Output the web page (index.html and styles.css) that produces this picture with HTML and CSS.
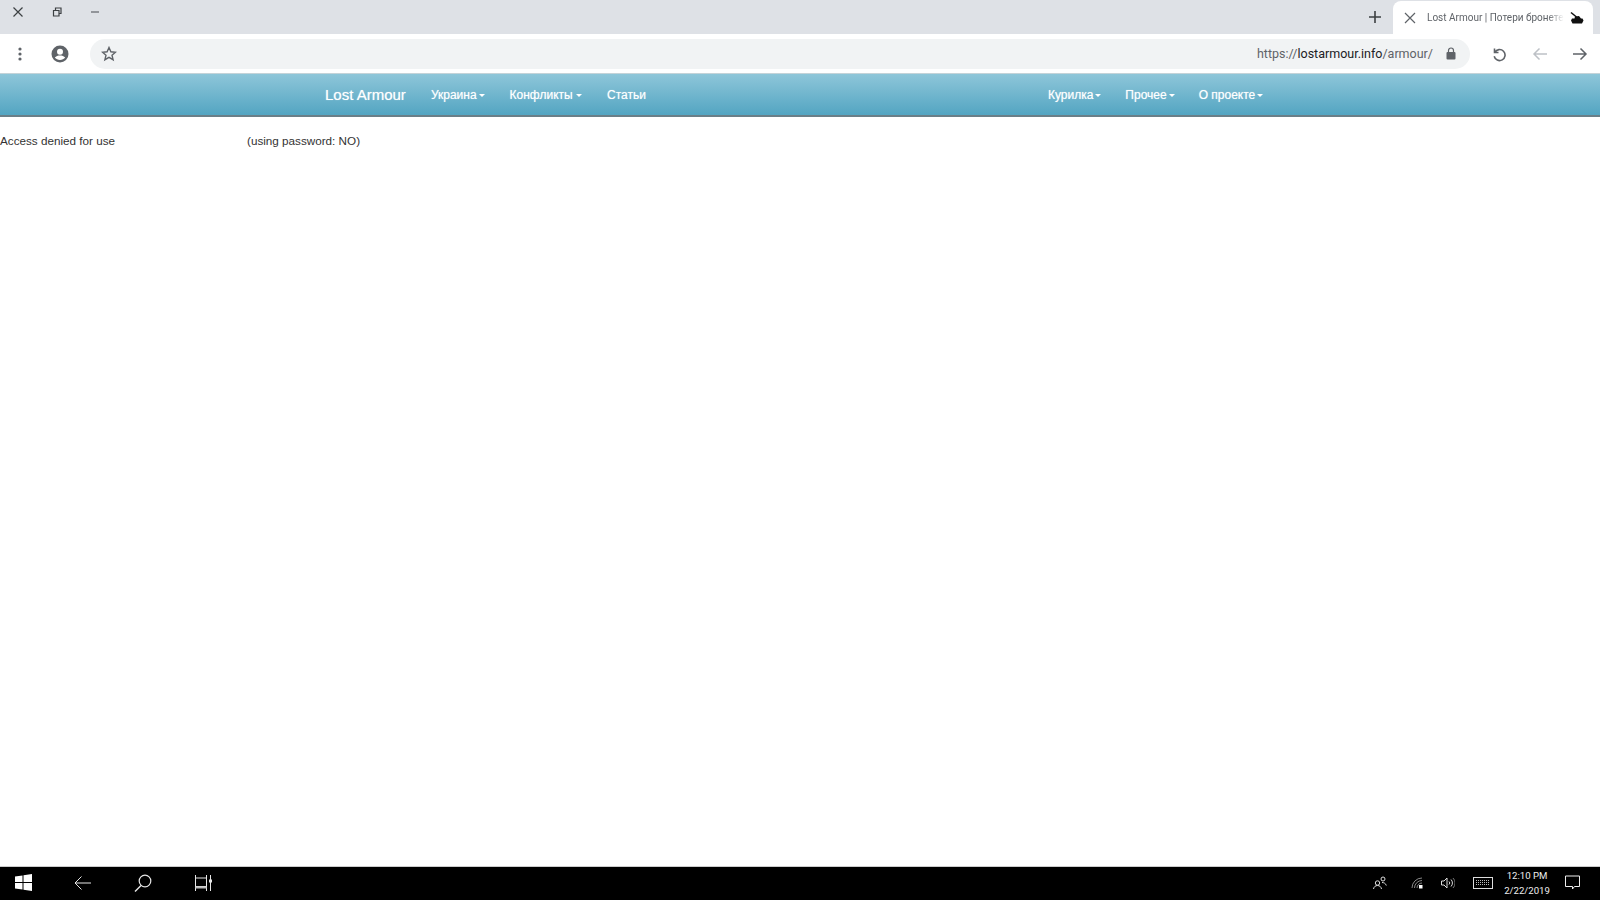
FILE: index.html
```html
<!DOCTYPE html>
<html lang="ru">
<head>
    <meta charset="UTF-8">
    <title>Lost Armour | Потери бронетехники</title>
    <link rel="stylesheet" href="styles.css">
</head>
<body>
    <div class="tabstrip">
        <div class="window-btns">
            <svg class="win-btn" width="14" height="14" viewBox="0 0 14 14"><path d="M2.5 2.5l9 9M11.5 2.5l-9 9" stroke="#3c4043" stroke-width="1.2" fill="none"/></svg>
            <svg class="win-btn" width="14" height="14" viewBox="0 0 14 14"><path d="M3.5 5.5h5.5v5.5h-5.500zM5.500 5.500v-2.500h5.500v5.500h-2" stroke="#3c4043" stroke-width="1.200" fill="none"/></svg>
            <svg class="win-btn" width="14" height="14" viewBox="0 0 14 14"><path d="M3 7h8" stroke="#5f6368" stroke-width="1.200" fill="none"/></svg>
        </div>
        <div class="tab-new">
            <svg width="14" height="14" viewBox="0 0 14 14"><path d="M7 1v12M1 7h12" stroke="#3c4043" stroke-width="1.600" fill="none"/></svg>
        </div>
        <div class="tab">
            <svg class="tab-close" width="14" height="14" viewBox="0 0 14 14"><path d="M2 2l10 10M12 2l-10 10" stroke="#5f6368" stroke-width="1.200" fill="none"/></svg>
            <span class="tab-title">Lost Armour | Потери бронете</span>
            <svg class="tab-icon" width="14" height="14" viewBox="0 0 14 14"><path d="M1 1.500l5.500 4.500" stroke="#111" stroke-width="1.500" fill="none"/><path d="M5 5.500l4-.5 2 2.500h1.500l1 2-1.500 3h-9.500l-1.500-3 1-2h2.500z" fill="#111"/></svg>
        </div>
    </div>

    <div class="toolbar">
        <svg class="tool-dots" width="4" height="14" viewBox="0 0 4 14"><circle cx="2" cy="2" r="1.600" fill="#5f6368"/><circle cx="2" cy="7" r="1.600" fill="#5f6368"/><circle cx="2" cy="12" r="1.600" fill="#5f6368"/></svg>
        <svg class="tool-user" width="18" height="18" viewBox="0 0 18 18"><circle cx="9" cy="9" r="8.500" fill="#5f6368"/><circle cx="9" cy="6.800" r="3" fill="#fff"/><path d="M3.800 12.600c1.200-1.500 3.200-2.100 5.200-2.100s4 .6 5.200 2.100c-1.200 1.500-3.100 2.500-5.200 2.500s-4-1-5.200-2.500z" fill="#fff"/></svg>
        <div class="omnibox">
            <svg width="16" height="16" viewBox="0 0 16 16"><path d="M8 1.500l1.900 4.300 4.600.4-3.500 3 1.100 4.500-4.100-2.400-4.100 2.400 1.100-4.500-3.500-3 4.600-.4z" stroke="#5f6368" stroke-width="1.400" fill="none"/></svg>
            <span class="url"><span class="url-dim">https://</span>lostarmour.info<span class="url-dim">/armour/</span></span>
            <svg class="lock" width="10" height="13" viewBox="0 0 10 13"><path d="M2.500 5v-1.500a2.500 2.500 0 0 1 5 0v1.500" stroke="#5f6368" stroke-width="1.200" fill="none"/><rect x="0.500" y="5" width="9" height="7.500" rx="1" fill="#5f6368"/></svg>
        </div>
        <div class="tool-nav">
            <svg width="16" height="16" viewBox="0 0 16 16"><path d="M3.500 2.500v4h4M3.800 6.300a5.500 5.500 0 1 1-.6 4" stroke="#5f6368" stroke-width="1.600" fill="none"/></svg>
            <svg width="16" height="14" viewBox="0 0 16 14"><path d="M15 7h-13M7.500 1.500l-5.500 5.500 5.500 5.500" stroke="#bdc1c6" stroke-width="1.500" fill="none"/></svg>
            <svg width="16" height="14" viewBox="0 0 16 14"><path d="M1 7h13M8.500 1.500l5.500 5.500-5.500 5.500" stroke="#5f6368" stroke-width="1.500" fill="none"/></svg>
        </div>
    </div>

    <nav class="navbar">
        <a class="brand">Lost Armour</a>
        <ul class="nav">
            <li>Украина<b class="caret"></b></li>
            <li>Конфликты <b class="caret caret-wide"></b></li>
            <li>Статьи</li>
        </ul>
        <ul class="nav nav-right">
            <li>Курилка<b class="caret"></b></li>
            <li>Прочее<b class="caret"></b></li>
            <li>О проекте<b class="caret"></b></li>
        </ul>
    </nav>

    <main class="content">
        <p class="error"><span>Access denied for use</span><span class="error-tail">(using password: NO)</span></p>
    </main>

    <div class="taskbar">
        <div class="task-left">
            <svg width="17" height="17" viewBox="0 0 17 17"><path d="M0 2.500l7.500-1v6.500h-7.500zM8.500 1.300l8.500-1.300v8h-8.500zM0 9h7.500v6.500l-7.500-1zM8.500 9h8.500v8l-8.500-1.300z" fill="#fff"/></svg>
            <svg width="18" height="14" viewBox="0 0 18 14"><path d="M17 7h-16M7.500 .5l-6.500 6.500 6.500 6.500" stroke="#e6e6e6" stroke-width="1" fill="none"/></svg>
            <svg width="18" height="18" viewBox="0 0 18 18"><circle cx="11" cy="7" r="5.800" stroke="#e6e6e6" stroke-width="1.200" fill="none"/><path d="M7 11.500l-6 6" stroke="#e6e6e6" stroke-width="1.400" fill="none"/></svg>
            <svg class="task-view" width="18" height="16" viewBox="0 0 18 16"><path d="M.5 0v16M11.500 0v16M.5 3h11M.5 11.500h11M15.500 0v16" stroke="#e6e6e6" stroke-width="1" fill="none"/><path d="M.5 12.500h11" stroke="#bbb" stroke-width="2" fill="none"/><rect x="14" y="4.500" width="3" height="3" fill="#e6e6e6"/></svg>
        </div>
        <div class="task-right">
            <svg class="tray-people" width="14" height="14" viewBox="0 0 14 14"><circle cx="4.500" cy="7" r="2.200" stroke="#ddd" fill="none"/><path d="M.5 13c.3-2 1.800-3.500 4-3.500s3.700 1.500 4 3.500" stroke="#ddd" fill="none"/><circle cx="10" cy="3" r="2" stroke="#ddd" fill="none"/><path d="M9 6.500c2 0 3.700 1 4.300 3" stroke="#ddd" fill="none"/></svg>
            <svg class="tray-wifi" width="12" height="12" viewBox="0 0 12 12"><path d="M1 11a10 10 0 0 1 10-10M3.500 11a7.500 7.500 0 0 1 7.500-7.500M6 11a5 5 0 0 1 5-5" stroke="#888" fill="none"/><rect x="8" y="8" width="3.500" height="3.500" fill="#fff"/></svg>
            <svg class="tray-sound" width="14" height="14" viewBox="0 0 14 14"><path d="M.5 5h2.500l3-3v10l-3-3h-2.500zM8 5.500a2 2 0 0 1 0 3M10 3.500a5 5 0 0 1 0 7" stroke="#ddd" fill="none"/><path d="M12 2a7 7 0 0 1 0 10" stroke="#777" fill="none"/></svg>
            <svg class="tray-keys" width="20" height="12" viewBox="0 0 20 12"><rect x=".5" y=".5" width="19" height="11" stroke="#ddd" fill="none"/><path d="M3 3.500h14M3 5.500h14M3 7.500h14" stroke="#bbb" stroke-dasharray="1 1" fill="none"/></svg>
            <div class="clock"><span>12:10 PM</span><span>2/22/2019</span></div>
            <svg class="tray-note" width="15" height="15" viewBox="0 0 15 15"><path d="M.5 1h14v10.500h-5l-2 2.500v-2.500h-7z" stroke="#eee" fill="none"/></svg>
        </div>
    </div>
</body>
</html>
```

FILE: styles.css
```css
* {
    box-sizing: border-box;
}

html, body {
    height: 100%;
}

body {
    margin: 0;
    display: flex;
    flex-direction: column;
    background-color: #fff;
    font-family: "Liberation Sans", Arial, sans-serif;
    overflow: hidden;
}

/* browser chrome */
.tabstrip {
    height: 34px;
    display: flex;
    align-items: stretch;
    background-color: #dee1e6;
}

.window-btns {
    display: flex;
    align-items: flex-start;
    gap: 24.500px;
    padding: 5px 0 0 11px;
}

.tab-new {
    margin-left: auto;
    display: flex;
    align-items: center;
    margin-right: 11px;
}

.tab {
    width: 200px;
    margin: 1px 7px 0 0;
    padding: 0 9px 0 10px;
    display: flex;
    align-items: center;
    background-color: #fff;
    border-radius: 8px 8px 0 0;
}

.tab-close {
    flex-shrink: 0;
}

.tab-title {
    margin-left: 10px;
    white-space: nowrap;
    font-family: Roboto, sans-serif;
    font-size: 10px;
    color: #5f6368;
    -webkit-mask-image: linear-gradient(to right, #000 88%, transparent);
    mask-image: linear-gradient(to right, #000 88%, transparent);
}

.tab-icon {
    margin-left: auto;
}

.toolbar {
    height: 39px;
    display: flex;
    align-items: center;
    background-color: #fff;
    padding-left: 18px;
}

.tool-user {
    margin-left: 29px;
}

.omnibox {
    width: 1380px;
    height: 30px;
    margin-left: 21px;
    padding: 0 14px 0 11px;
    display: flex;
    align-items: center;
    background-color: #f1f3f4;
    border-radius: 15px;
}

.url {
    margin-left: auto;
    font-family: Roboto, sans-serif;
    font-size: 12.500px;
    color: #202124;
}

.url-dim {
    color: #5f6368;
}

.lock {
    margin-left: 13px;
}

.tool-nav {
    display: flex;
    align-items: center;
    gap: 24.500px;
    margin-left: 21px;
}

/* site navbar */
.navbar {
    height: 44px;
    display: flex;
    align-items: center;
    padding-left: 325px;
    background: linear-gradient(to bottom, #8ec6d9, #53a5c2);
    border-top: 1px solid #c4d3d8;
    border-bottom: 2px solid #6a7f88;
    color: #fff;
    font-size: 12px;
    text-shadow: 0 0 1px rgba(255, 255, 255, 0.6);
}

.brand {
    font-size: 15px;
    margin-right: 25px;
}

.nav {
    list-style: none;
    margin: 0;
    padding: 0;
    display: flex;
    gap: 25px;
}

.nav-right {
    gap: 24px;
    margin-left: 402px;
}

.caret {
    display: inline-block;
    width: 0;
    height: 0;
    margin-left: 2px;
    vertical-align: middle;
    border-top: 3px solid #fff;
    border-left: 3.500px solid transparent;
    border-right: 3.500px solid transparent;
}

.caret-wide {
    margin-left: 0;
}

/* page */
.content {
    flex: 1;
}

.error {
    margin: 15px 0 0;
    font-size: 11.700px;
    line-height: 17px;
    color: #333;
    display: flex;
}

.error-tail {
    margin-left: 132px;
}

/* windows taskbar */
.taskbar {
    height: 34px;
    padding-bottom: 2px;
    display: flex;
    justify-content: space-between;
    align-items: center;
    background-color: #000;
    border-top: 1px solid #ccc;
}

.task-left {
    display: flex;
    align-items: center;
    gap: 42px;
    padding-left: 15px;
}

.task-view {
    margin-left: 1px;
}

.task-right {
    display: flex;
    align-items: center;
    padding-right: 20px;
}

.tray-wifi {
    margin-left: 24px;
}

.tray-sound {
    margin-left: 18px;
}

.tray-keys {
    margin-left: 18px;
}

.clock {
    width: 52px;
    margin-left: 8px;
    display: flex;
    flex-direction: column;
    align-items: center;
    font-family: Roboto, sans-serif;
    font-size: 9.600px;
    line-height: 15px;
    color: #eee;
}

.tray-note {
    margin-left: 12px;
}
```
